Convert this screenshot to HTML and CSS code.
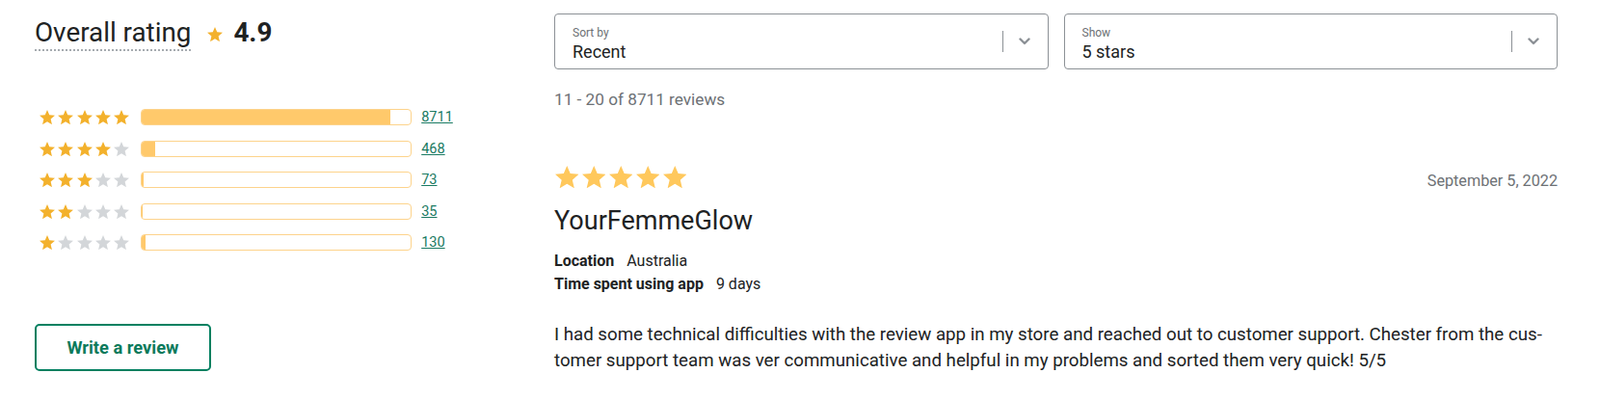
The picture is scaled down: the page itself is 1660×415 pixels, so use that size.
FILE: index.html
```html
<!DOCTYPE html>
<html lang="en">
<head>
<meta charset="utf-8">
<title>Reviews</title>
<link rel="stylesheet" href="styles.css">
</head>
<body>
<svg class="defs" width="0" height="0" aria-hidden="true">
  <defs>
    <symbol id="star" viewBox="2 2 20 19.02">
      <path d="M12 17.27L18.18 21l-1.64-7.03L22 9.24l-7.19-.61L12 2 9.19 8.63 2 9.24l5.46 4.73L5.82 21z"/>
    </symbol>
  </defs>
</svg>
<div class="page">
  <aside class="summary">
    <h2 class="overall"><span class="overall-label">Overall rating</span><span class="overall-score"><svg class="star star-head"><use href="#star"/></svg>4.9</span></h2>
    <ul class="dist">
      <li class="dist-row">
        <span class="row-stars"><svg class="star star-sm on"><use href="#star"/></svg><svg class="star star-sm on"><use href="#star"/></svg><svg class="star star-sm on"><use href="#star"/></svg><svg class="star star-sm on"><use href="#star"/></svg><svg class="star star-sm on"><use href="#star"/></svg></span>
        <span class="bar"><span class="bar-fill" style="width:92.5%"></span></span>
        <a class="count-link" href="#">8711</a>
      </li>
      <li class="dist-row">
        <span class="row-stars"><svg class="star star-sm on"><use href="#star"/></svg><svg class="star star-sm on"><use href="#star"/></svg><svg class="star star-sm on"><use href="#star"/></svg><svg class="star star-sm on"><use href="#star"/></svg><svg class="star star-sm off"><use href="#star"/></svg></span>
        <span class="bar"><span class="bar-fill" style="width:4.97%"></span></span>
        <a class="count-link" href="#">468</a>
      </li>
      <li class="dist-row">
        <span class="row-stars"><svg class="star star-sm on"><use href="#star"/></svg><svg class="star star-sm on"><use href="#star"/></svg><svg class="star star-sm on"><use href="#star"/></svg><svg class="star star-sm off"><use href="#star"/></svg><svg class="star star-sm off"><use href="#star"/></svg></span>
        <span class="bar"><span class="bar-fill" style="width:0.78%"></span></span>
        <a class="count-link" href="#">73</a>
      </li>
      <li class="dist-row">
        <span class="row-stars"><svg class="star star-sm on"><use href="#star"/></svg><svg class="star star-sm on"><use href="#star"/></svg><svg class="star star-sm off"><use href="#star"/></svg><svg class="star star-sm off"><use href="#star"/></svg><svg class="star star-sm off"><use href="#star"/></svg></span>
        <span class="bar"><span class="bar-fill" style="width:0.37%"></span></span>
        <a class="count-link" href="#">35</a>
      </li>
      <li class="dist-row">
        <span class="row-stars"><svg class="star star-sm on"><use href="#star"/></svg><svg class="star star-sm off"><use href="#star"/></svg><svg class="star star-sm off"><use href="#star"/></svg><svg class="star star-sm off"><use href="#star"/></svg><svg class="star star-sm off"><use href="#star"/></svg></span>
        <span class="bar"><span class="bar-fill" style="width:1.38%"></span></span>
        <a class="count-link" href="#">130</a>
      </li>
    </ul>
    <button class="write-btn" type="button">Write a review</button>
  </aside>

  <main class="reviews">
    <div class="filters">
      <div class="select">
        <div class="select-text">
          <span class="select-label">Sort by</span>
          <span class="select-value">Recent</span>
        </div>
        <span class="select-divider"></span>
        <svg class="chevron" width="12" height="8" viewBox="0 0 12 8"><polyline points="1.5,1.5 6,6 10.5,1.5"/></svg>
      </div>
      <div class="select">
        <div class="select-text">
          <span class="select-label">Show</span>
          <span class="select-value">5 stars</span>
        </div>
        <span class="select-divider"></span>
        <svg class="chevron" width="12" height="8" viewBox="0 0 12 8"><polyline points="1.5,1.5 6,6 10.5,1.5"/></svg>
      </div>
    </div>
    <p class="count">11 - 20 of 8711 reviews</p>

    <article class="review">
      <div class="review-head">
        <span class="review-stars"><svg class="star star-lg"><use href="#star"/></svg><svg class="star star-lg"><use href="#star"/></svg><svg class="star star-lg"><use href="#star"/></svg><svg class="star star-lg"><use href="#star"/></svg><svg class="star star-lg"><use href="#star"/></svg></span>
        <span class="review-date">September 5, 2022</span>
      </div>
      <h3 class="reviewer">YourFemmeGlow</h3>
      <dl class="meta">
        <div class="meta-row"><dt>Location</dt><dd>Australia</dd></div>
        <div class="meta-row"><dt>Time spent using app</dt><dd>9 days</dd></div>
      </dl>
      <p class="review-body">I had some technical difficulties with the review app in my store and reached out to customer support. Chester from the cus&shy;tomer support team was ver communicative and helpful in my problems and sorted them very quick! 5/5</p>
    </article>
  </main>
</div>
</body>
</html>
```

FILE: styles.css
```css
* {
  box-sizing: border-box;
}

body {
  margin: 0;
  background: #ffffff;
  color: #202223;
  font-family: Roboto, "Liberation Sans", Arial, sans-serif;
}

.defs {
  position: absolute;
  width: 0;
  height: 0;
  overflow: hidden;
}

.page {
  display: grid;
  grid-template-columns: 483px 1041px;
  column-gap: 56px;
  padding-left: 36px;
  align-items: start;
}

/* ---------- left summary ---------- */

.summary {
  padding-top: 17px;
}

.overall {
  margin: 0;
  font-size: 27.8px;
  line-height: 34px;
  font-weight: 400;
  color: #202223;
}

.overall-label {
  display: inline-block;
  border-bottom: 2px dotted #a6abb0;
}

.overall-score {
  margin-left: 17px;
  font-weight: 700;
}

.star {
  fill: currentColor;
  flex: none;
}

.star-head {
  width: 16px;
  height: 15.2px;
  margin-right: 11px;
  color: #f3b12c;
}

.dist {
  list-style: none;
  margin: 60px 0 0;
  padding: 0;
  display: flex;
  flex-direction: column;
  gap: 15.6px;
}

.dist-row {
  display: flex;
  align-items: center;
  height: 17px;
}

.row-stars {
  display: flex;
  gap: 3.3px;
  margin-left: 5px;
}

.star-sm {
  width: 16px;
  height: 15.2px;
}

.star-sm.on {
  color: #f3b12c;
}

.star-sm.off {
  color: #d3d6d9;
}

.bar {
  display: block;
  width: 281px;
  height: 17px;
  margin-left: 12px;
  border: 1px solid #fdd38b;
  border-radius: 4px;
  overflow: hidden;
}

.bar-fill {
  display: block;
  height: 100%;
  background: #ffc96b;
}

.count-link {
  margin-left: 10px;
  font-size: 14.5px;
  color: #1a7a62;
  text-decoration: underline;
}

.write-btn {
  display: block;
  margin-top: 76px;
  width: 183px;
  height: 49px;
  border: 2px solid #008060;
  border-radius: 5px;
  background: #ffffff;
  color: #0b7a5b;
  font-family: Roboto, "Liberation Sans", Arial, sans-serif;
  font-size: 18.3px;
  font-weight: 700;
  padding: 0;
}

/* ---------- right reviews ---------- */

.reviews {
  padding-top: 14px;
}

.filters {
  display: grid;
  grid-template-columns: 1fr 1fr;
  gap: 16px;
}

.select {
  display: flex;
  align-items: center;
  height: 58px;
  border: 1px solid #8c9196;
  border-radius: 4px;
  padding-left: 18px;
}

.select-text {
  flex: 1;
  display: flex;
  flex-direction: column;
  padding-top: 5px;
}

.select-label {
  font-size: 12px;
  line-height: 16px;
  color: #6d7175;
}

.select-value {
  font-size: 18px;
  line-height: 24px;
  color: #202223;
}

.select-divider {
  width: 1px;
  height: 22px;
  background: #8c9196;
}

.chevron {
  margin: 0 18px 0 16px;
  fill: none;
  stroke: #8c9196;
  stroke-width: 2.4;
  stroke-linecap: round;
  stroke-linejoin: round;
}

.count {
  margin: 19px 0 0;
  font-size: 17.2px;
  line-height: 24px;
  color: #6d7175;
}

.review {
  margin-top: 57px;
}

.review-head {
  display: flex;
  justify-content: space-between;
  align-items: flex-end;
}

.review-stars {
  display: flex;
  gap: 3.4px;
  margin-left: 1px;
}

.star-lg {
  width: 24.5px;
  height: 23.3px;
  color: #ffc85c;
}

.review-date {
  font-size: 16.2px;
  line-height: 14px;
  color: #6d7175;
}

.reviewer {
  margin: 18px 0 0;
  font-size: 27px;
  line-height: 32px;
  font-weight: 400;
  color: #202223;
}

.meta {
  margin: 14px 0 0;
}

.meta-row {
  display: flex;
  gap: 13px;
  font-size: 16px;
  line-height: 24px;
}

.meta-row dt {
  font-weight: 700;
}

.meta-row dd {
  margin: 0;
}

.review-body {
  margin: 26.5px 0 0;
  font-size: 18.7px;
  line-height: 26.7px;
  color: #202223;
}
```
